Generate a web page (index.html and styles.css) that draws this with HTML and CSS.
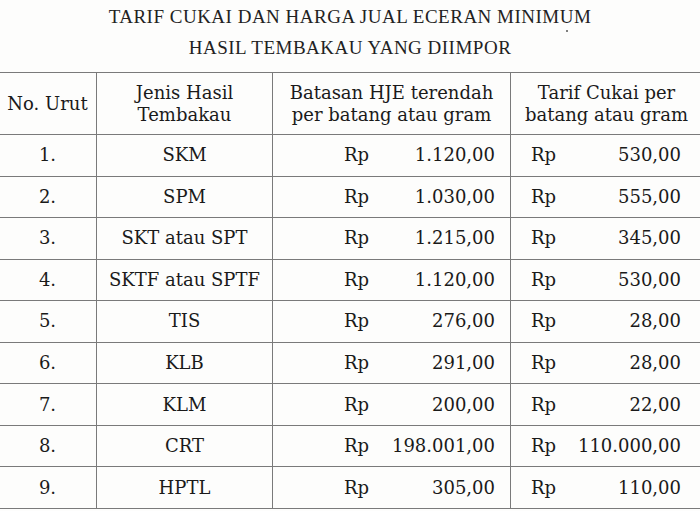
FILE: index.html
```html
<!DOCTYPE html>
<html lang="id">
<head>
<meta charset="utf-8">
<title>Tarif Cukai</title>
<link rel="stylesheet" href="styles.css">
</head>
<body>
<div class="page">
  <div class="title">
    <div class="title-line">TARIF CUKAI DAN HARGA JUAL ECERAN MINIMUM</div>
    <div class="title-line">HASIL TEMBAKAU YANG DIIMPOR</div>
    <span class="speck speck-title"></span>
  </div>
  <table class="tarif">
    <colgroup>
      <col class="c-no">
      <col class="c-jenis">
      <col class="c-hje">
      <col class="c-tarif">
    </colgroup>
    <thead>
      <tr>
        <th>No. Urut</th>
        <th>Jenis Hasil<br>Tembakau</th>
        <th>Batasan HJE terendah<br>per batang atau gram</th>
        <th>Tarif Cukai per<br>batang atau gram</th>
      </tr>
    </thead>
    <tbody>
      <tr><td class="no">1.</td><td class="jenis">SKM</td><td><div class="money hje"><span>Rp</span><span>1.120,00</span></div></td><td><div class="money trf"><span>Rp</span><span>530,00</span></div></td></tr>
      <tr><td class="no">2.</td><td class="jenis">SPM</td><td><div class="money hje"><span>Rp</span><span>1.030,00</span></div></td><td><div class="money trf"><span>Rp</span><span>555,00</span></div></td></tr>
      <tr><td class="no">3.</td><td class="jenis">SKT atau SPT</td><td><div class="money hje"><span>Rp</span><span>1.215,00</span></div></td><td><div class="money trf"><span>Rp</span><span>345,00</span></div></td></tr>
      <tr><td class="no">4.</td><td class="jenis">SKTF atau SPTF</td><td><div class="money hje"><span>Rp</span><span>1.120,00</span></div></td><td><div class="money trf"><span>Rp</span><span>530,00</span></div></td></tr>
      <tr><td class="no">5.</td><td class="jenis">TIS</td><td><div class="money hje"><span>Rp</span><span>276,00</span></div></td><td><div class="money trf"><span>Rp</span><span>28,00</span></div></td></tr>
      <tr><td class="no">6.</td><td class="jenis">KLB</td><td><div class="money hje"><span>Rp</span><span>291,00</span></div></td><td><div class="money trf"><span>Rp</span><span>28,00</span></div></td></tr>
      <tr><td class="no">7.</td><td class="jenis">KLM</td><td><div class="money hje"><span>Rp</span><span>200,00</span></div></td><td><div class="money trf"><span>Rp</span><span>22,00</span></div></td></tr>
      <tr><td class="no">8.</td><td class="jenis">CRT</td><td><div class="money hje"><span>Rp</span><span>198.001,00</span></div></td><td><div class="money trf"><span>Rp</span><span>110.000,00</span></div></td></tr>
      <tr><td class="no">9.</td><td class="jenis">HPTL</td><td><div class="money hje"><span>Rp</span><span>305,00</span></div></td><td><div class="money trf"><span>Rp</span><span>110,00</span></div></td></tr>
    </tbody>
  </table>
</div>
</body>
</html>
```
FILE: styles.css
```css
html, body {
  margin: 0;
  padding: 0;
  background: #fdfdfc;
}
body {
  width: 700px;
  height: 511px;
  overflow: hidden;
  color: #1e1e1e;
}
.page {
  width: 700px;
}
.title {
  position: relative;
  padding-top: 1px;
  margin-bottom: 9px;
  font-family: "Liberation Serif", "Times New Roman", serif;
  font-size: 19px;
  letter-spacing: 0.5px;
  line-height: 31px;
  text-align: center;
  color: #222;
}
.speck {
  position: absolute;
  width: 2px;
  height: 2px;
  border-radius: 50%;
  background: #555;
}
.speck-title {
  left: 566px;
  top: 30px;
}
.tarif {
  margin-left: -2px;
  border-collapse: collapse;
  table-layout: fixed;
  width: 704px;
  font-family: "DejaVu Serif", serif;
  font-size: 18px;
  color: #1a1a1a;
}
.c-no { width: 98px; }
.c-jenis { width: 176px; }
.c-hje { width: 238px; }
.c-tarif { width: 192px; }
.tarif th,
.tarif td {
  border: 1.5px solid #7a7a7a;
  padding: 0;
  text-align: center;
  vertical-align: middle;
}
.tarif th {
  font-weight: normal;
  height: 61px;
  line-height: 22px;
}
.tarif td {
  height: 40.55px;
  line-height: 22px;
}
.money {
  display: flex;
  justify-content: space-between;
}
.money.hje {
  padding-left: 71px;
  padding-right: 15px;
}
.money.trf {
  padding-left: 20px;
  padding-right: 21px;
}
```
